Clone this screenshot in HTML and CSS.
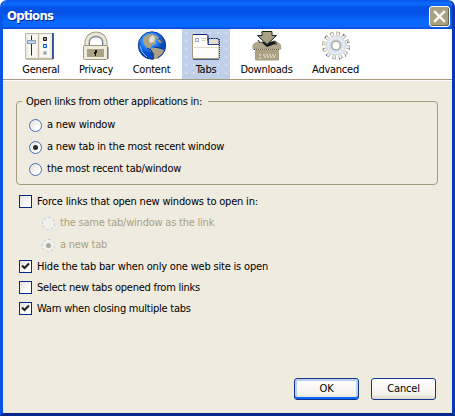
FILE: index.html
```html
<!DOCTYPE html>
<html lang="en">
<head>
<meta charset="utf-8">
<title>Options</title>
<link rel="stylesheet" href="styles.css">
</head>
<body>
<div class="window">
  <header class="titlebar">
    <h1>Options</h1>
    <button class="close" aria-label="Close"><svg width="21" height="21" viewBox="0 0 21 21"><path d="M6 6L15 15M15 6L6 15" stroke="#fff" stroke-width="2.4" stroke-linecap="square"/></svg></button>
  </header>
  <nav class="toolbar">
    <div class="tool general">
      <svg width="30" height="30" viewBox="0 0 30 30"><path d="M.5 2.500h27v25H.5z" fill="#eeece1" stroke="#c2bda5"/><path d="M3 4h9v22H3zM15 4h10v22H15z" fill="#f8f7f2"/><path d="M13.500 3v24M1 28.500h27" stroke="#c2bca6"/><path d="M28 2v26" stroke="#08298c" stroke-width="1.500"/><path d="M6.500 4.500v20" stroke="#182f72"/><path d="M2.500 9.500h8v3h-8z" fill="#c9d5ee" stroke="#8798bd"/><path d="M18.500 6.500h3v3h-3z" fill="#a19878" stroke="#171a25"/><path d="M18.500 13.500h3v3h-3z" fill="#cfe1ff" stroke="#0855e5"/><path d="M18.500 20.500h3v3h-3z" fill="#aaa183" stroke="#b9c6df"/></svg>
      <span>General</span>
    </div>
    <div class="tool privacy">
      <svg width="30" height="30" viewBox="0 0 30 30"><path d="M6 15v-3c0-12 18-12 18 0v3" fill="none" stroke="#a69d80" stroke-width="5"/><path d="M6 15v-3c0-12 18-12 18 0v3" fill="none" stroke="#e9e8df" stroke-width="3"/><path d="M8.500 14v-2c0-8 13-8 13 0v2" fill="none" stroke="#6379a7"/><rect x="2.500" y="14.500" width="24" height="14" rx="1" fill="#eeebdf" stroke="#a19878"/><path d="M6 18h17v8H6z" fill="#aba283"/><path d="M27 16v12" stroke="#696454"/><path d="M14 19h2v3h-1v3h-1v-2h-1v-2h1z" fill="#111"/></svg>
      <span>Privacy</span>
    </div>
    <div class="tool content">
      <svg width="30" height="30" viewBox="0 0 30 30"><defs><radialGradient id="globe" cx=".4" cy=".3"><stop offset="0" stop-color="#9ed0ff"/><stop offset=".55" stop-color="#298aff"/><stop offset="1" stop-color="#0549c4"/></radialGradient></defs><circle cx="15" cy="14.500" r="13.700" fill="url(#globe)" stroke="#123b91"/><path d="M7 6l5-3 7 1 3 3-3 2v4l-4 1-2 4-3-1-3-4-1-4z" fill="#aba283"/><path d="M15 17h5l7 2-2 4-4 3-1 2h-3v-5l-4-4zM20 9l4-1 2 3-3 1z" fill="#aba283"/><path d="M13 6l3-2 2 3-1 4-4 1-1-3z" fill="#dfddd2"/><path d="M10 17l4 2M17 16l7 1M22 7l3 4M14 19l2 4" stroke="#183160" fill="none"/><path d="M3 15l2 6 5 5" stroke="#82bfff" fill="none"/></svg>
      <span>Content</span>
    </div>
    <div class="tool tabs">
      <svg width="30" height="30" viewBox="0 0 30 30"><path d="M1.500 27.500V3.500h15v6H28v18z" fill="#fdfcf8" stroke="#a59b7d"/><path d="M2 3.500h14l1 1v9h11" fill="none" stroke="#122a7c"/><path d="M17.500 7.500H27l1 2v4H17.500z" fill="#e3ded0" stroke="#122a7c" stroke-dasharray="2 .5"/><path d="M3 16.500h25" stroke="#ded9c8"/><path d="M28.500 8v20" stroke="#364474" stroke-dasharray="1 1"/><path d="M2 28.500h26" stroke="#4f5d86"/><path d="M4.500 7.500h3v3h-3z" fill="#e9edf6" stroke="#92a9d2"/><path d="M10 7.500h5M11 9.500h3" stroke="#d6c9aa"/></svg>
      <span>Tabs</span>
    </div>
    <div class="tool downloads">
      <svg width="30" height="30" viewBox="0 0 30 30"><path d="M3 12l3-1h18l4 2 1 5H1v-4z" fill="#b1a88b" stroke="#aaa183"/><path d="M2 18.500h26" stroke="#292d35" stroke-dasharray="1 1"/><path d="M3.500 19h23v10h-23z" fill="#aba283" stroke="#aaa183"/><path d="M8 28v-5M12 26h12M11 24h13" stroke="#f0eee5" stroke-dasharray="2 1"/><path d="M9 11h14v2l-8 3z" fill="#171b18"/><path d="M10 .5h10v4h4.500L15 13.500 5.500 4.500H10z" fill="#aaa182" stroke="#122a25"/><path d="M18 12l4-2 2 1v3M6 9l2 3" stroke="#17211d" fill="none"/></svg>
      <span>Downloads</span>
    </div>
    <div class="tool advanced">
      <svg width="30" height="30" viewBox="0 0 30 30"><circle cx="15" cy="14.500" r="12" fill="none" stroke="#aaa28b" stroke-width="4" stroke-dasharray="3.500 2.783"/><circle cx="15" cy="14.500" r="11.500" fill="none" stroke="#edf2fa" stroke-width="3.500" stroke-dasharray="2 4.021" stroke-dashoffset="-.7"/><circle cx="15" cy="14.500" r="9.500" fill="#e5ebf6" stroke="#c6c2b4" stroke-width=".6"/><circle cx="15" cy="14.500" r="6.500" fill="#cbd8ee"/><circle cx="15" cy="14.500" r="4.300" fill="#fff" stroke="#aaa28b" stroke-width="1.300"/><path d="M22 4h1M26 11h1M28 18h1M24 25h1M18 28h1M5 24h1M2 18h1M4 6h1" stroke="#254aa0"/></svg>
      <span>Advanced</span>
    </div>
  </nav>
  <main class="pane">
    <fieldset class="group">
      <legend>Open links from other applications in:</legend>
      <label class="row"><i class="radio"></i><span>a new window</span></label>
      <label class="row"><i class="radio on"></i><span>a new tab in the most recent window</span></label>
      <label class="row"><i class="radio"></i><span>the most recent tab/window</span></label>
    </fieldset>
    <div class="options">
      <label class="row"><i class="check"></i><span>Force links that open new windows to open in:</span></label>
      <label class="row sub"><i class="radio"></i><span>the same tab/window as the link</span></label>
      <label class="row sub"><i class="radio on"></i><span>a new tab</span></label>
      <label class="row"><i class="check"><svg width="11" height="11"><path d="M2 4.500L4.500 7 9 2.500" /></svg></i><span>Hide the tab bar when only one web site is open</span></label>
      <label class="row tight"><i class="check"></i><span>Select new tabs opened from links</span></label>
      <label class="row tight"><i class="check"><svg width="11" height="11"><path d="M2 4.500L4.500 7 9 2.500" /></svg></i><span>Warn when closing multiple tabs</span></label>
    </div>
    <footer class="actions">
      <button class="btn default">OK</button>
      <button class="btn">Cancel</button>
    </footer>
  </main>
</div>
</body>
</html>
```
FILE: styles.css
```css
* { box-sizing: border-box; }
body { margin: 0; background: #fff; font: 11px/14px "DejaVu Sans Condensed", "DejaVu Sans", sans-serif; font-stretch: condensed; letter-spacing: -.25px; color: #000; }
button { font: inherit; letter-spacing: inherit; padding: 0; }
svg { display: block; }
.window { width: 455px; height: 416px; display: flex; flex-direction: column; border: solid #08298c; border-width: 0 3px 3px; border-left-color: #0855e8; border-right-color: #0638b8; border-radius: 7px 7px 0 0; overflow: hidden; background: #efebdf; }
.titlebar { height: 29px; flex: none; margin: 0 -3px; padding: 2px 5px 0 7px; display: flex; align-items: center; justify-content: space-between; background: linear-gradient(#0855e8 0, #096dff 4px, #0553e6 7px, #0553e6 13px, #0969ff 22px, #0969ff 26px, #0549d5 29px); }
h1 { margin: 1px 0 0; color: #fff; font: bold 13px/18px "DejaVu Sans Condensed", "DejaVu Sans", sans-serif; font-stretch: condensed; letter-spacing: -.7px; text-shadow: 1px 1px #08298c; }
.close { width: 21px; height: 21px; margin-top: 1px; border: 1px solid #fff; border-radius: 3px; background: #a9a080; box-shadow: inset -1px -1px #696450; }
.close svg { margin: -1px; fill: none; }
.toolbar { height: 51px; flex: none; display: flex; background: #fff; border-bottom: 1px solid #a59c80; padding-left: 11px; }
.tool { height: 50px; display: flex; flex-direction: column; align-items: center; padding-top: 2px; white-space: nowrap; }
.tool span { margin-top: 2px; }
.general { width: 54px; }
.general svg { margin-right: 2px; }
.privacy { width: 56px; }
.content { width: 58px; padding-right: 3px; }
.tabs { width: 48px; background: radial-gradient(circle, #e8f0fa 0 .6px, transparent .8px) 0 0 / 8px 8px, #c0d0e8; }
.downloads { width: 73px; }
.advanced { width: 65px; }
.pane { flex: 1; display: flex; flex-direction: column; padding: 13px 14px 13px 13px; border-top: 1px solid #fff; letter-spacing: -.19px; }
.group { height: 91px; flex: none; margin: 0; padding: 6px 12px 0; border: 1px solid #a59c80; border-radius: 4px; min-width: 0; }
legend { margin-left: -7px; padding: 0 6px 0 4px; height: 14px; line-height: 16px; letter-spacing: -.27px; }
.row { display: flex; align-items: center; height: 22px; white-space: nowrap; }
.radio { flex: none; width: 13px; height: 13px; border: 1px solid #496cac; border-radius: 50%; background: linear-gradient(135deg, #e3e1d9, #fff 75%); margin-right: 5px; display: grid; place-items: center; }
.radio.on::after { content: ""; width: 5px; height: 5px; border-radius: 50%; background: #292b25; }
.options { padding: 6px 0 0 3px; }
.options .row { height: 21px; }
.options .sub { height: 22px; padding-left: 23px; color: #aaa183; letter-spacing: -.22px; }
.options .tight { letter-spacing: -.24px; }
.sub .radio { border: 1px dashed #b9cbe5; background: #f4f1e9; }
.sub .radio.on::after { background: #a7a89c; }
.check { flex: none; width: 13px; height: 13px; border: 1px solid #08298c; background: linear-gradient(135deg, #e5e2d9, #fff 75%); margin-right: 5px; }
.check path { fill: none; stroke: #202020; stroke-width: 2; }
.actions { margin-top: auto; display: flex; justify-content: flex-end; gap: 12px; padding-right: 2px; }
.btn { width: 65px; height: 22px; border: 1px solid #123590; border-radius: 3px; background: linear-gradient(#fff, #f5f3ed 75%, #ddd8ca); color: #000; }
.default { box-shadow: inset 0 -2px #0969ff, inset 0 0 0 2px #bdd0ee; }
```
